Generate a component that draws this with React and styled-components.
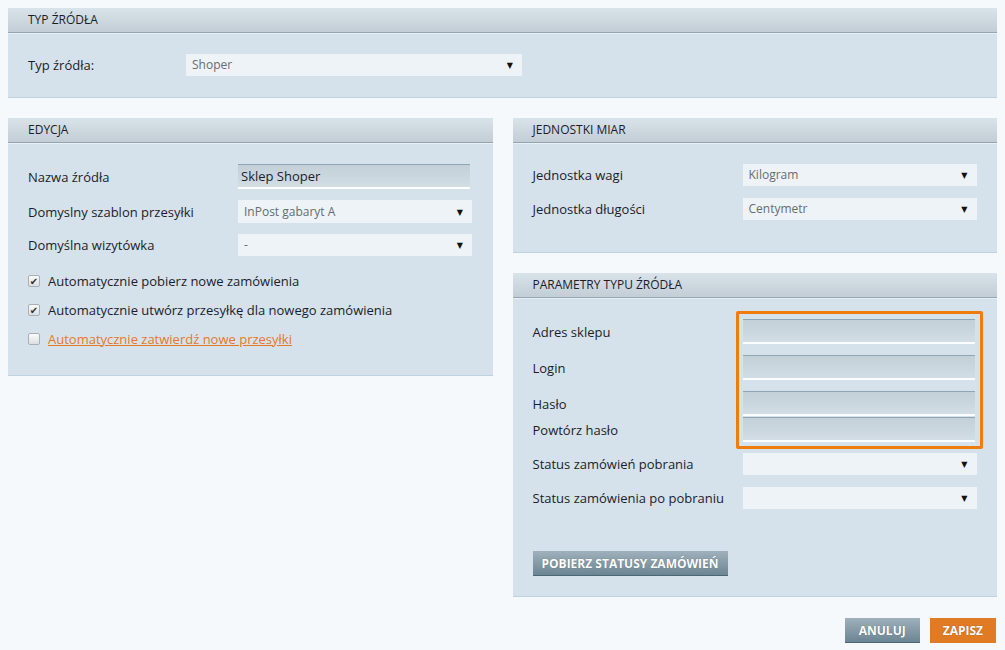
import styled, { createGlobalStyle } from "styled-components";

const GlobalStyle = createGlobalStyle`
  body {
    margin: 8px;
    background: #f5f9fc;
    font-family: "Open Sans", "DejaVu Sans", sans-serif;
    font-size: 13px;
    color: #1c1c2a;
  }
`;

const Page = styled.div`
  display: flex;
  flex-direction: column;
  gap: 20px;
`;

const Columns = styled.div`
  display: grid;
  grid-template-columns: 1fr 1fr;
  gap: 20px;
  align-items: start;
`;

const Stack = styled.div`
  display: flex;
  flex-direction: column;
  gap: 20px;
`;

const Panel = styled.section`
  background: #d5e2eb;
  border-bottom: 1px solid #bed2e1;
`;

const PanelHeader = styled.div`
  height: 24px;
  line-height: 24px;
  padding-left: 20px;
  font-size: 12px;
  text-transform: uppercase;
  color: #1c1c2a;
  background: linear-gradient(#d9e3ea, #c2cdd5);
  border-bottom: 1px solid #91a5b3;
  box-shadow: 0 1px 0 #e9eff3;
`;

const PanelBody = styled.div`
  padding: ${(p) => p.$pad || "21px 20px 22px"};
`;

const Row = styled.div`
  display: grid;
  grid-template-columns: ${(p) => p.$label || "210px"} ${(p) => p.$field || "234px"};
  align-items: center;
  margin-bottom: ${(p) => (p.$gap === undefined ? 11 : p.$gap)}px;
`;

const Label = styled.label`
  font-size: 13px;
  color: #1c1c2a;
  white-space: nowrap;
`;

const Select = styled.div`
  position: relative;
  height: ${(p) => p.$h || 22}px;
  line-height: ${(p) => p.$h || 22}px;
  background: #eef3f7;
  padding-left: 6px;
  font-size: 12px;
  color: #666c72;
  &::after {
    content: "▼";
    position: absolute;
    right: 9px;
    top: 0;
    font-size: 8px;
    color: #111;
  }
`;

const Input = styled.div`
  box-sizing: border-box;
  width: 232px;
  height: 25px;
  line-height: 22px;
  padding-left: 3px;
  font-size: 13px;
  color: #1c1c2a;
  background: linear-gradient(#c3d0d8, #d2dde4);
  border-top: 1px solid #8fa6b5;
  border-bottom: 2px solid #fbfdfe;
`;

const CheckList = styled.div`
  display: flex;
  flex-direction: column;
`;

const CheckRow = styled.div`
  display: flex;
  align-items: center;
  gap: 8px;
  height: 29px;
`;

const Box = styled.span`
  box-sizing: border-box;
  width: 12px;
  height: 12px;
  border: 1px solid #a9b0b5;
  border-radius: 2px;
  background: linear-gradient(#fbfbfb, #dcdfe2);
  display: flex;
  align-items: center;
  justify-content: center;
  font-size: 10px;
  line-height: 1;
  color: #333;
`;

const CheckText = styled.span`
  font-size: 13px;
  color: ${(p) => (p.$link ? "#e6782a" : "#1c1c2a")};
  text-decoration: ${(p) => (p.$link ? "underline" : "none")};
`;

const Highlight = styled.div`
  position: relative;
  margin-bottom: 11px;
  &::after {
    content: "";
    position: absolute;
    left: 203px;
    top: -8px;
    width: 241px;
    height: 132px;
    border: 3px solid #f07c0b;
    border-radius: 2px;
    pointer-events: none;
  }
`;

const Button = styled.button`
  height: 25px;
  padding: 0 ${(p) => p.$px || 14}px;
  border: none;
  border-bottom: 1px solid ${(p) => (p.$primary ? "#e07a23" : "#4d6676")};
  background: ${(p) =>
    p.$primary ? "#e07a23" : "linear-gradient(#9fb1bc, #6c8594)"};
  color: #fff;
  font-family: "Open Sans", "DejaVu Sans", sans-serif;
  font-weight: bold;
  font-size: 12px;
  text-transform: uppercase;
  text-shadow: 0 0 1px rgba(0, 0, 0, 0.35);
  cursor: pointer;
`;

const Footer = styled.div`
  display: flex;
  justify-content: flex-end;
  gap: 10px;
  margin-top: 1px;
  padding-right: 1px;
`;

const checks = [
  { text: "Automatycznie pobierz nowe zamówienia", checked: true },
  { text: "Automatycznie utwórz przesyłkę dla nowego zamówienia", checked: true },
  { text: "Automatycznie zatwierdź nowe przesyłki", checked: false, link: true },
];

export default function App() {
  return (
    <>
      <GlobalStyle />
      <Page>
        <Panel>
          <PanelHeader>Typ źródła</PanelHeader>
          <PanelBody $pad="21px 20px 21px">
            <Row $label="158px" $field="336px" $gap={0}>
              <Label>Typ źródła:</Label>
              <Select>Shoper</Select>
            </Row>
          </PanelBody>
        </Panel>

        <Columns>
          <Panel>
            <PanelHeader>Edycja</PanelHeader>
            <PanelBody>
              <Row $field="232px">
                <Label>Nazwa źródła</Label>
                <Input>Sklep Shoper</Input>
              </Row>
              <Row>
                <Label>Domyslny szablon przesyłki</Label>
                <Select $h={23}>InPost gabaryt A</Select>
              </Row>
              <Row $gap={10}>
                <Label>Domyślna wizytówka</Label>
                <Select>-</Select>
              </Row>
              <CheckList>
                {checks.map((c) => (
                  <CheckRow key={c.text}>
                    <Box>{c.checked ? "✔" : ""}</Box>
                    <CheckText $link={c.link}>{c.text}</CheckText>
                  </CheckRow>
                ))}
              </CheckList>
            </PanelBody>
          </Panel>

          <Stack>
            <Panel>
              <PanelHeader>Jednostki miar</PanelHeader>
              <PanelBody $pad="21px 20px 21px">
                <Row $gap={12}>
                  <Label>Jednostka wagi</Label>
                  <Select>Kilogram</Select>
                </Row>
                <Row>
                  <Label>Jednostka długości</Label>
                  <Select>Centymetr</Select>
                </Row>
              </PanelBody>
            </Panel>

            <Panel>
              <PanelHeader>Parametry typu źródła</PanelHeader>
              <PanelBody $pad="21px 20px 20px">
                <Highlight>
                  <Row $field="232px">
                    <Label>Adres sklepu</Label>
                    <Input />
                  </Row>
                  <Row $field="232px">
                    <Label>Login</Label>
                    <Input />
                  </Row>
                  <Row $field="232px" $gap={1}>
                    <Label>Hasło</Label>
                    <Input />
                  </Row>
                  <Row $field="232px" $gap={0}>
                    <Label>Powtórz hasło</Label>
                    <Input />
                  </Row>
                </Highlight>
                <Row $gap={12}>
                  <Label>Status zamówień pobrania</Label>
                  <Select />
                </Row>
                <Row $gap={42}>
                  <Label>Status zamówienia po pobraniu</Label>
                  <Select />
                </Row>
                <Button $px={9}>Pobierz statusy zamówień</Button>
              </PanelBody>
            </Panel>
          </Stack>
        </Columns>

        <Footer>
          <Button>Anuluj</Button>
          <Button $primary $px={13}>Zapisz</Button>
        </Footer>
      </Page>
    </>
  );
}
